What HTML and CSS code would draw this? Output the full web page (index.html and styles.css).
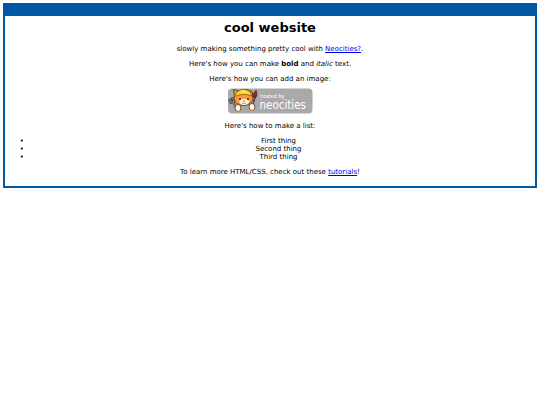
FILE: index.html
```
<!DOCTYPE html>
<html lang="en">
<head>
<meta charset="utf-8">
<title>cool website</title>
<link rel="stylesheet" href="styles.css">
</head>
<body>
	<div class="box">
		<h1 class="title">cool website</h1>

		<p>slowly making something pretty cool with <a href="#">Neocities?</a>.</p>

		<p>Here's how you can make <strong>bold</strong> and <em>italic</em> text.</p>

		<p>Here's how you can add an image:</p>
		<svg class="badge" viewBox="0 0 170 52" role="img" aria-label="hosted by neocities">
			<rect x="0" y="1" width="169" height="50" rx="8" fill="#a9a9a9"/>
			<!-- fork -->
			<path d="M2 22L6 30L14 27L10 18M6 20L10 29M10 28L19 46" fill="none" stroke="#484848" stroke-width="4"/>
			<path d="M3 22L7 29L13 26L10 19M10 29L19 45" fill="none" stroke="#dedede" stroke-width="1"/>
			<!-- ears -->
			<path d="M13 18L11 3L24 7L38 3L49 8L49 22Z" fill="#f09a38" stroke="#664020" stroke-width="2" stroke-linejoin="round"/>
			<!-- face -->
			<ellipse cx="31" cy="21" rx="19" ry="14" fill="#f39a40" stroke="#70431f" stroke-width="2"/>
			<path d="M22 26Q32 17 43 26Q41 34 32 34Q24 34 22 26Z" fill="#fff3e2"/>
			<!-- helmet -->
			<path d="M13 17Q18 3 32 3Q46 4 47 16Q31 9 13 17Z" fill="#ffd52d" stroke="#a76b19" stroke-width="2"/>
			<path d="M26 7Q32 4 37 9" fill="none" stroke="#fff29a" stroke-width="2"/>
			<circle cx="24" cy="22" r="2" fill="#412b20"/>
			<circle cx="40" cy="22" r="2" fill="#412b20"/>
			<path d="M30 25H35L32 28Z" fill="#c55039"/>
			<path d="M28 30Q32 32 36 30" fill="none" stroke="#704128" stroke-width="1"/>
			<!-- brush -->
			<path d="M54 18L47 44" stroke="#484848" stroke-width="3"/>
			<path d="M51 18Q50 10 56 5Q60 14 55 20Z" fill="#a81f30" stroke="#63212a" stroke-width="2"/>
			<!-- paws -->
			<ellipse cx="20" cy="40" rx="6" ry="7" fill="#fffaf0" stroke="#79512d" stroke-width="2"/>
			<ellipse cx="48" cy="38" rx="6" ry="7" fill="#fffaf0" stroke="#79512d" stroke-width="2"/>
			<path d="M14 46Q19 51 25 46M43 44Q49 49 53 43" fill="none" stroke="#ef9a3c" stroke-width="2"/>
			<text class="badge-small" x="64" y="19">hosted by</text>
			<text class="badge-name" x="63" y="41">neocities</text>
		</svg>

		<p>Here's how to make a list:</p>

		<ul class="list">
			<li>First thing</li>
			<li>Second thing</li>
			<li>Third thing</li>
		</ul>

		<p>To learn more HTML/CSS, check out these <a href="#">tutorials</a>!</p>
	</div>
</body>
</html>
```

FILE: styles.css
```
body{
	margin:3px;
	background:#fff;
	color:#000;
	font-family:"DejaVu Sans", Verdana, sans-serif;
	font-size:7px;
	line-height:8px;
	text-align:center;
}
.box{
	border:2px solid #0057a3;
	border-top-width:13px;
	padding:4px 4px 3px;
}
.title{
	margin:0 0 9px;
	font-size:13px;
	line-height:16px;
}
p{
	margin:7px 0;
}
a{
	color:#00e;
}
.badge{
	display:block;
	width:85px;
	height:26px;
	margin:-2px auto 8px;
}
.badge-small{
	fill:#fff;
	font-family:"DejaVu Sans Condensed", "DejaVu Sans", sans-serif;
	font-size:11px;
}
.badge-name{
	fill:#fff;
	font-family:"DejaVu Sans Condensed", "DejaVu Sans", sans-serif;
	font-size:23px;
}
.list{
	margin:7px 0;
	padding-left:17px;
}
.list li::marker{
	content:"• ";
}
```
